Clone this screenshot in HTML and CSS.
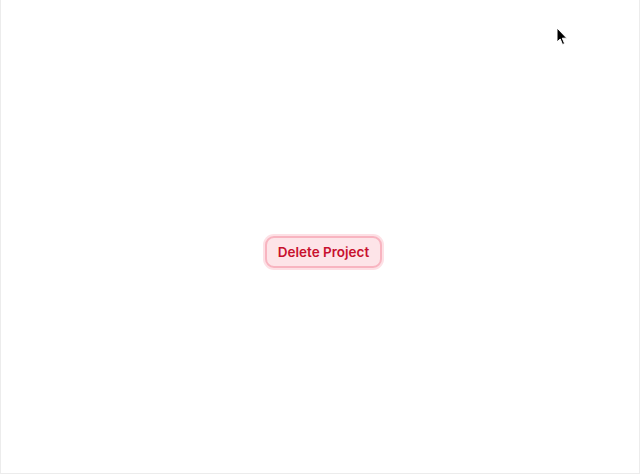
FILE: index.html
```html
<!DOCTYPE html>
<html>
<head>
<meta charset="utf-8">
<link rel="stylesheet" href="styles.css">
</head>
<body>
<div class="frame">
  <button class="btn-delete">Delete Project</button>
  <svg class="cursor" width="12" height="19" viewBox="0 0 12 19">
    <path d="M1 1 L1 15 L4.2 12 L6.5 17.5 L8.6 16.6 L6.3 11.2 L10.8 11.2 Z" fill="#000" stroke="#fff" stroke-width="1" stroke-linejoin="round"/>
  </svg>
</div>
</body>
</html>
```
FILE: styles.css
```css
html, body {
  margin: 0;
  padding: 0;
  width: 640px;
  height: 474px;
  background: #fff;
  overflow: hidden;
}
.frame {
  position: relative;
  box-sizing: border-box;
  width: 640px;
  height: 474px;
  border-left: 1px solid #ececec;
  border-right: 1px solid #ececec;
  border-bottom: 1px solid #ececec;
  display: flex;
  align-items: center;
  justify-content: center;
  font-family: Inter, "Liberation Sans", sans-serif;
}
.btn-delete {
  margin-top: 30px;
  margin-left: 7px;
  padding: 0 11px;
  height: 32px;
  border: 2px solid #f8b4c0;
  border-radius: 9px;
  background: #fde4e8;
  box-shadow: 0 0 0 2px #fde0e5;
  color: #c8102e;
  font-family: Inter, "Liberation Sans", sans-serif;
  font-size: 13.5px;
  font-weight: 600;
  letter-spacing: 0;
}
.cursor {
  position: absolute;
  left: 555px;
  top: 27px;
}
```
